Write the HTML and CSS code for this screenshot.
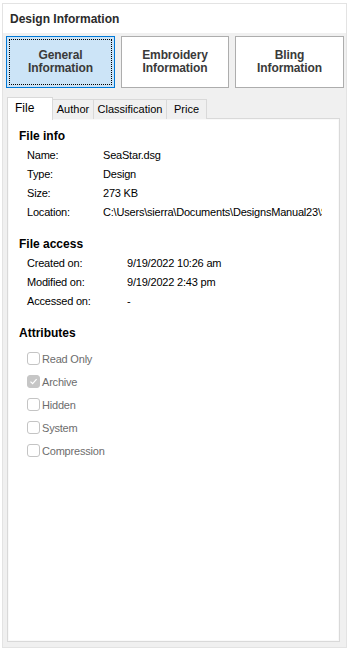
FILE: index.html
```html
<!DOCTYPE html>
<html lang="en">
<head>
    <meta charset="UTF-8">
    <meta name="viewport" content="width=device-width, initial-scale=1.0">
    <title>Design Information</title>
    <link rel="stylesheet" href="styles.css">
</head>
<body>
    <div class="window">
        <div class="title">Design Information</div>

        <div class="body">
            <div class="mode-buttons">
                <button class="mode-btn active"><span>General<br>Information</span></button>
                <button class="mode-btn"><span>Embroidery<br>Information</span></button>
                <button class="mode-btn"><span>Bling<br>Information</span></button>
            </div>

            <div class="tabs">
                <div class="tab selected">File</div>
                <div class="tab author">Author</div>
                <div class="tab classification">Classification</div>
                <div class="tab price">Price</div>
            </div>

            <div class="panel">
                <div class="section-title">File info</div>
                <div class="row"><span class="label">Name:</span><span class="value">SeaStar.dsg</span></div>
                <div class="row"><span class="label">Type:</span><span class="value">Design</span></div>
                <div class="row"><span class="label">Size:</span><span class="value">273 KB</span></div>
                <div class="row"><span class="label">Location:</span><span class="value">C:\Users\sierra\Documents\DesignsManual23\SeaStar.dsg</span></div>

                <div class="section-title spaced">File access</div>
                <div class="row wide"><span class="label">Created on:</span><span class="value">9/19/2022 10:26 am</span></div>
                <div class="row wide"><span class="label">Modified on:</span><span class="value">9/19/2022 2:43 pm</span></div>
                <div class="row wide"><span class="label">Accessed on:</span><span class="value">-</span></div>

                <div class="section-title spaced">Attributes</div>
                <div class="checks">
                    <div class="check"><span class="box"></span>Read Only</div>
                    <div class="check"><span class="box checked"><svg width="9" height="9" viewBox="0 0 9 9"><path d="M1.5 4.6 L3.6 6.7 L7.6 2.2" fill="none" stroke="#fff" stroke-width="1.2"/></svg></span>Archive</div>
                    <div class="check"><span class="box"></span>Hidden</div>
                    <div class="check"><span class="box"></span>System</div>
                    <div class="check"><span class="box"></span>Compression</div>
                </div>
            </div>
        </div>
    </div>
</body>
</html>
```

FILE: styles.css
```css
* {
    margin: 0;
    padding: 0;
    box-sizing: border-box;
}

body {
    background: #fff;
    font-family: "Liberation Sans", Arial, sans-serif;
    font-size: 11px;
    letter-spacing: -0.2px;
    color: #000;
}

.window {
    margin: 3px 4px 3px 2px;
    height: 645px;
    border: 1px solid #e3e3e3;
    display: flex;
    flex-direction: column;
}

.title {
    height: 29px;
    padding: 8px 0 0 7px;
    background: #fff;
    font-size: 12px;
    font-weight: bold;
    letter-spacing: 0;
    color: #2b2b2b;
}

.body {
    flex: 1;
    background: #f0f0f0;
    padding: 3px 1px 5px 3px;
    display: flex;
    flex-direction: column;
}

.mode-buttons {
    display: flex;
    gap: 6px;
}

.mode-btn {
    width: 109px;
    height: 52px;
    background: #fff;
    border: 1px solid #adadad;
    font-family: "Liberation Sans", Arial, sans-serif;
    font-size: 12px;
    font-weight: bold;
    line-height: 13px;
    letter-spacing: -0.1px;
    color: #3a3a3a;
    padding: 2px;
}

.mode-btn:nth-child(2) {
    width: 108px;
}

.mode-btn span {
    display: flex;
    align-items: center;
    justify-content: center;
    height: 100%;
    border: 1px dotted transparent;
}

.mode-btn.active {
    background: #cce4f7;
    border-color: #0078d7;
}

.mode-btn.active span {
    border-color: #000;
}

.tabs {
    display: flex;
    align-items: flex-end;
    margin: 9px 0 0 1px;
    height: 22px;
    position: relative;
    z-index: 1;
}

.tab {
    height: 20px;
    padding-top: 3px;
    text-align: center;
    border: 1px solid #d9d9d9;
    border-bottom: none;
    background: #f0f0f0;
    margin-left: -1px;
    letter-spacing: 0;
}

.tab.author {
    width: 42px;
}

.tab.classification {
    width: 74px;
}

.tab.price {
    width: 41px;
}

.tab:first-child {
    margin-left: 0;
}

.tab.selected {
    height: 23px;
    width: 46px;
    padding: 3px 0 0 7px;
    text-align: left;
    background: #fff;
    margin-bottom: -1px;
    font-size: 12px;
}

.panel {
    flex: 1;
    margin: -1px 5px 0 1px;
    background: #fff;
    border: 1px solid #d9d9d9;
    box-shadow: inset 0 0 0 1px #f9f9f9;
    padding: 8px 0 0 11px;
}

.section-title {
    font-size: 12px;
    font-weight: bold;
    letter-spacing: 0;
    line-height: 19px;
}

.section-title.spaced {
    margin-top: 13px;
}

.row {
    display: flex;
    line-height: 19px;
    padding-left: 8px;
}

.label {
    width: 76px;
    flex: none;
}

.row.wide .label {
    width: 100px;
}

.value {
    flex: none;
    white-space: nowrap;
    overflow: hidden;
    width: 219px;
}

.checks {
    margin-top: 4px;
    padding-left: 8px;
}

.check {
    display: flex;
    align-items: center;
    height: 23px;
    color: #6d6d6d;
}

.box {
    width: 13px;
    height: 13px;
    border: 1px solid #c4c4c4;
    border-radius: 3px;
    margin-right: 2px;
    display: flex;
    align-items: center;
    justify-content: center;
}

.box.checked {
    background: #c6c6c6;
    border-color: #c6c6c6;
}
```
